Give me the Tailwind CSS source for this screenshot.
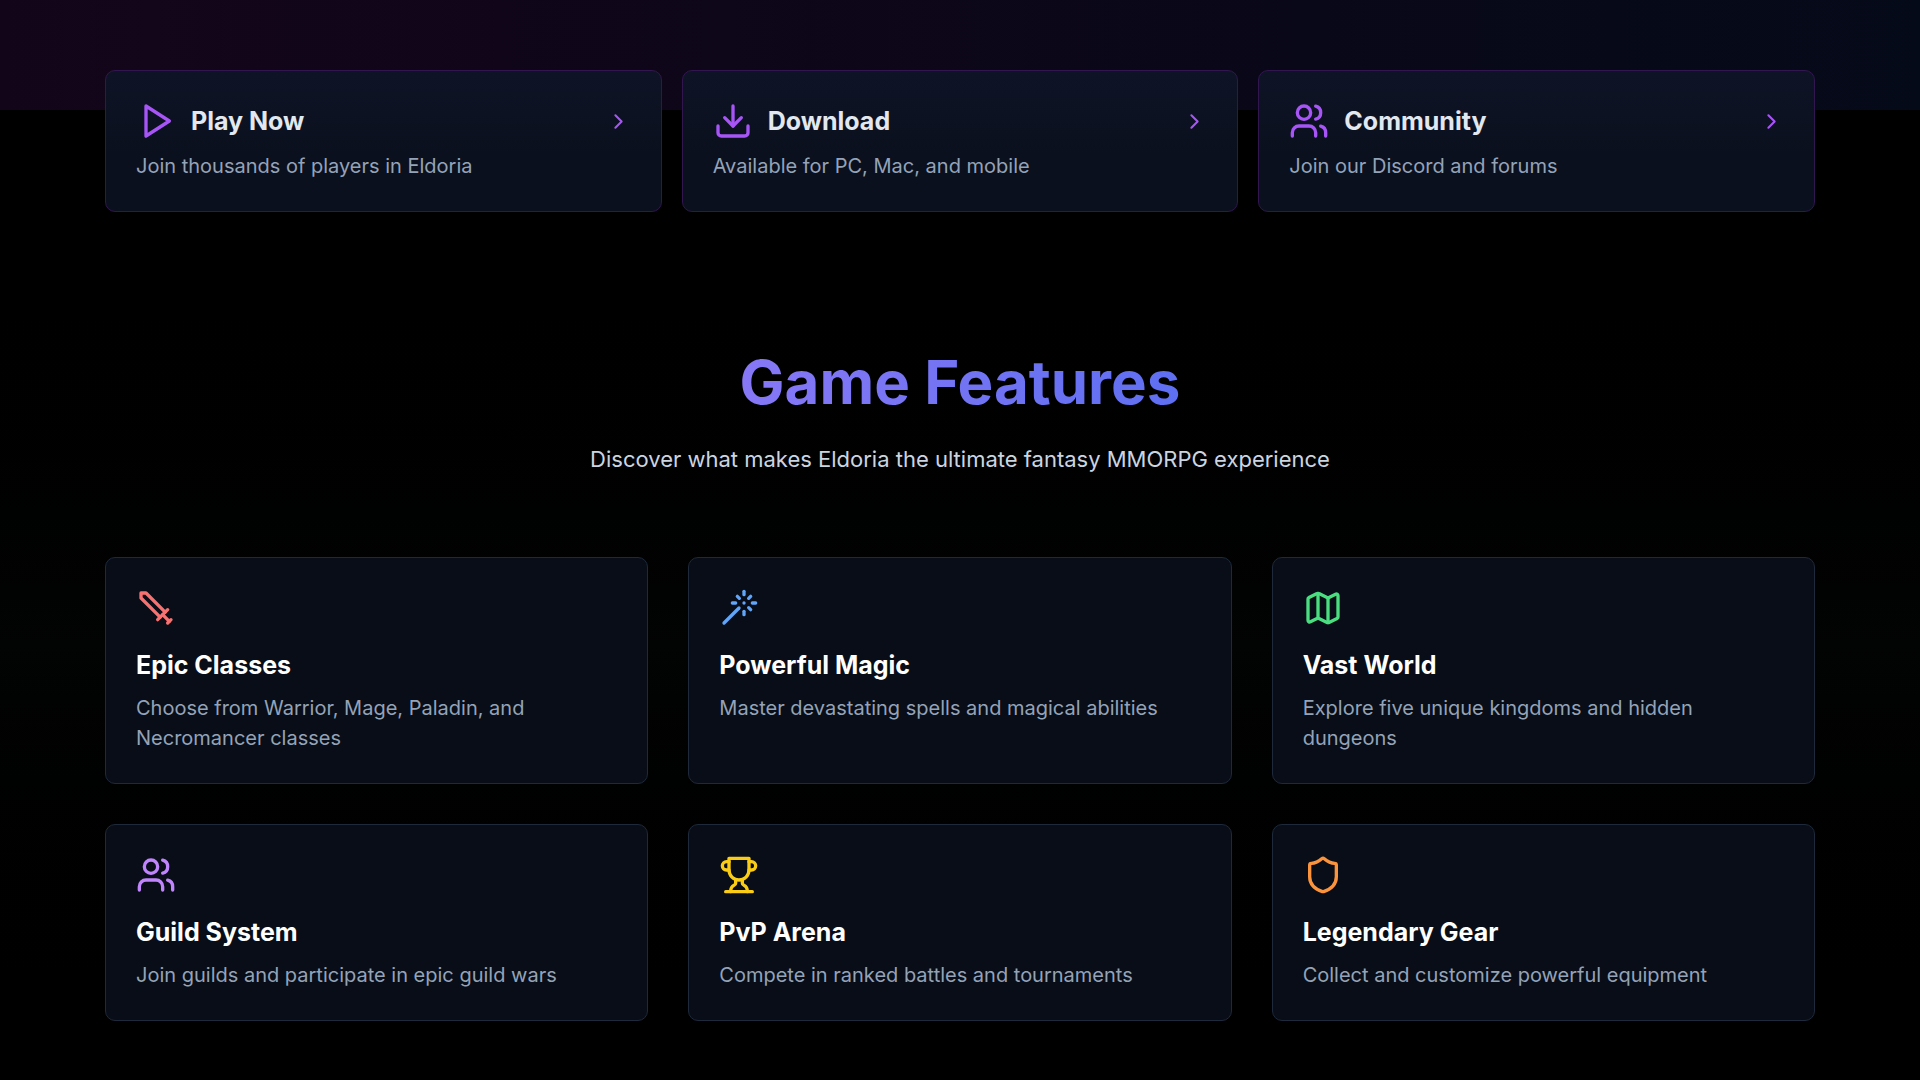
<!DOCTYPE html>
<html lang="en">
<head>
  <meta charset="UTF-8">
  <meta name="viewport" content="width=device-width, initial-scale=1.0">
  <title>Eldoria - Game Features</title>
  <script src="https://cdn.jsdelivr.net/npm/@tailwindcss/browser@4"></script>
</head>
<body class="bg-black min-h-screen font-['Inter',sans-serif] text-xl leading-[30px] text-white">

  <!-- Quick links, overlapping the end of the hero -->
  <section class="bg-[linear-gradient(to_right,#12051a_0%,#13051a_8%,#0e0619_38%,#090818_68%,#050a19_100%)] bg-no-repeat bg-[length:100%_110px] pt-[70px]">
    <div class="max-w-[1760px] mx-auto px-[25px] grid grid-cols-3 gap-5">

      <a href="#play" class="block rounded-[10px] border border-[#31164f] bg-linear-to-b from-[#0e1426] to-[#0b101e] to-60% p-[30px]">
        <div class="flex items-center justify-between mb-2.5">
          <div class="flex items-center gap-[15px]">
            <svg class="size-10 text-[#a855f7]" viewBox="0 0 24 24" fill="none" stroke="currentColor" stroke-width="2" stroke-linecap="round" stroke-linejoin="round"><polygon points="6 3 20 12 6 21 6 3"/></svg>
            <h3 class="text-[25px] leading-[35px] font-bold text-slate-200">Play Now</h3>
          </div>
          <svg class="size-[25px] text-[#a855f7]" viewBox="0 0 24 24" fill="none" stroke="currentColor" stroke-width="2" stroke-linecap="round" stroke-linejoin="round"><path d="m9 18 6-6-6-6"/></svg>
        </div>
        <p class="text-[#94a3b8]">Join thousands of players in Eldoria</p>
      </a>

      <a href="#download" class="block rounded-[10px] border border-[#31164f] bg-linear-to-b from-[#0e1426] to-[#0b101e] to-60% p-[30px]">
        <div class="flex items-center justify-between mb-2.5">
          <div class="flex items-center gap-[15px]">
            <svg class="size-10 text-[#a855f7]" viewBox="0 0 24 24" fill="none" stroke="currentColor" stroke-width="2" stroke-linecap="round" stroke-linejoin="round"><path d="M21 15v4a2 2 0 0 1-2 2H5a2 2 0 0 1-2-2v-4"/><polyline points="7 10 12 15 17 10"/><line x1="12" x2="12" y1="15" y2="3"/></svg>
            <h3 class="text-[25px] leading-[35px] font-bold text-slate-200">Download</h3>
          </div>
          <svg class="size-[25px] text-[#a855f7]" viewBox="0 0 24 24" fill="none" stroke="currentColor" stroke-width="2" stroke-linecap="round" stroke-linejoin="round"><path d="m9 18 6-6-6-6"/></svg>
        </div>
        <p class="text-[#94a3b8]">Available for PC, Mac, and mobile</p>
      </a>

      <a href="#community" class="block rounded-[10px] border border-[#31164f] bg-linear-to-b from-[#0e1426] to-[#0b101e] to-60% p-[30px]">
        <div class="flex items-center justify-between mb-2.5">
          <div class="flex items-center gap-[15px]">
            <svg class="size-10 text-[#a855f7]" viewBox="0 0 24 24" fill="none" stroke="currentColor" stroke-width="2" stroke-linecap="round" stroke-linejoin="round"><path d="M16 21v-2a4 4 0 0 0-4-4H6a4 4 0 0 0-4 4v2"/><circle cx="9" cy="7" r="4"/><path d="M22 21v-2a4 4 0 0 0-3-3.87"/><path d="M16 3.13a4 4 0 0 1 0 7.75"/></svg>
            <h3 class="text-[25px] leading-[35px] font-bold text-slate-200">Community</h3>
          </div>
          <svg class="size-[25px] text-[#a855f7]" viewBox="0 0 24 24" fill="none" stroke="currentColor" stroke-width="2" stroke-linecap="round" stroke-linejoin="round"><path d="m9 18 6-6-6-6"/></svg>
        </div>
        <p class="text-[#94a3b8]">Join our Discord and forums</p>
      </a>

    </div>
  </section>

  <!-- Features -->
  <section class="pt-[140px] pb-[60px] bg-linear-to-b from-black via-[#020303] to-black">
    <div class="max-w-[1760px] mx-auto px-[25px]">
      <div class="text-center mb-20">
        <h2 class="text-6xl leading-[60px] font-bold mb-[30px] bg-[linear-gradient(to_right,#c084fc,#2563eb)] bg-clip-text text-transparent">Game Features</h2>
        <p class="text-[22px] leading-[35px] text-[#cbd5e1]">Discover what makes Eldoria the ultimate fantasy MMORPG experience</p>
      </div>

      <div class="grid grid-cols-3 gap-10">

        <div class="rounded-[10px] border border-[#1e293b] bg-[#080d17] p-[30px]">
          <svg class="size-10 mb-5 text-[#f87171]" viewBox="0 0 24 24" fill="none" stroke="currentColor" stroke-width="2" stroke-linecap="round" stroke-linejoin="round"><polyline points="14.5 17.5 3 6 3 3 6 3 17.5 14.5"/><line x1="13" x2="19" y1="19" y2="13"/><line x1="16" x2="20" y1="16" y2="20"/><line x1="19" x2="21" y1="21" y2="19"/></svg>
          <h3 class="text-[25px] leading-[35px] font-bold mb-2.5">Epic Classes</h3>
          <p class="text-[#94a3b8]">Choose from Warrior, Mage, Paladin, and Necromancer classes</p>
        </div>

        <div class="rounded-[10px] border border-[#1e293b] bg-[#080d17] p-[30px]">
          <svg class="size-10 mb-5 text-[#60a5fa]" viewBox="0 0 24 24" fill="none" stroke="currentColor" stroke-width="2" stroke-linecap="round" stroke-linejoin="round"><path d="M15 4V2"/><path d="M15 16v-2"/><path d="M8 9h2"/><path d="M20 9h2"/><path d="M17.8 11.8 19 13"/><path d="M15 9h.01"/><path d="M17.8 6.2 19 5"/><path d="m3 21 9-9"/><path d="M12.2 6.2 11 5"/></svg>
          <h3 class="text-[25px] leading-[35px] font-bold mb-2.5">Powerful Magic</h3>
          <p class="text-[#94a3b8]">Master devastating spells and magical abilities</p>
        </div>

        <div class="rounded-[10px] border border-[#1e293b] bg-[#080d17] p-[30px]">
          <svg class="size-10 mb-5 text-[#4ade80]" viewBox="0 0 24 24" fill="none" stroke="currentColor" stroke-width="2" stroke-linecap="round" stroke-linejoin="round"><path d="M14.106 5.553a2 2 0 0 0 1.788 0l3.659-1.83A1 1 0 0 1 21 4.619v12.764a1 1 0 0 1-.553.894l-4.553 2.277a2 2 0 0 1-1.788 0l-4.212-2.106a2 2 0 0 0-1.788 0l-3.659 1.83A1 1 0 0 1 3 19.381V6.618a1 1 0 0 1 .553-.894l4.553-2.277a2 2 0 0 1 1.788 0z"/><path d="M15 5.764v15"/><path d="M9 3.236v15"/></svg>
          <h3 class="text-[25px] leading-[35px] font-bold mb-2.5">Vast World</h3>
          <p class="text-[#94a3b8]">Explore five unique kingdoms and hidden dungeons</p>
        </div>

        <div class="rounded-[10px] border border-[#1e293b] bg-[#080d17] p-[30px]">
          <svg class="size-10 mb-5 text-[#c084fc]" viewBox="0 0 24 24" fill="none" stroke="currentColor" stroke-width="2" stroke-linecap="round" stroke-linejoin="round"><path d="M16 21v-2a4 4 0 0 0-4-4H6a4 4 0 0 0-4 4v2"/><circle cx="9" cy="7" r="4"/><path d="M22 21v-2a4 4 0 0 0-3-3.87"/><path d="M16 3.13a4 4 0 0 1 0 7.75"/></svg>
          <h3 class="text-[25px] leading-[35px] font-bold mb-2.5">Guild System</h3>
          <p class="text-[#94a3b8]">Join guilds and participate in epic guild wars</p>
        </div>

        <div class="rounded-[10px] border border-[#1e293b] bg-[#080d17] p-[30px]">
          <svg class="size-10 mb-5 text-[#facc15]" viewBox="0 0 24 24" fill="none" stroke="currentColor" stroke-width="2" stroke-linecap="round" stroke-linejoin="round"><path d="M6 9H4.5a2.5 2.5 0 0 1 0-5H6"/><path d="M18 9h1.5a2.5 2.5 0 0 0 0-5H18"/><path d="M4 22h16"/><path d="M10 14.66V17c0 .55-.47.98-.97 1.21C7.85 18.75 7 20.24 7 22"/><path d="M14 14.66V17c0 .55.47.98.97 1.21C16.15 18.75 17 20.24 17 22"/><path d="M18 2H6v7a6 6 0 0 0 12 0V2Z"/></svg>
          <h3 class="text-[25px] leading-[35px] font-bold mb-2.5">PvP Arena</h3>
          <p class="text-[#94a3b8]">Compete in ranked battles and tournaments</p>
        </div>

        <div class="rounded-[10px] border border-[#1e293b] bg-[#080d17] p-[30px]">
          <svg class="size-10 mb-5 text-[#fb923c]" viewBox="0 0 24 24" fill="none" stroke="currentColor" stroke-width="2" stroke-linecap="round" stroke-linejoin="round"><path d="M20 13c0 5-3.5 7.5-7.66 8.95a1 1 0 0 1-.67-.01C7.5 20.5 4 18 4 13V6a1 1 0 0 1 1-1c2 0 4.5-1.2 6.24-2.72a1.17 1.17 0 0 1 1.52 0C14.51 3.81 17 5 19 5a1 1 0 0 1 1 1z"/></svg>
          <h3 class="text-[25px] leading-[35px] font-bold mb-2.5">Legendary Gear</h3>
          <p class="text-[#94a3b8]">Collect and customize powerful equipment</p>
        </div>

      </div>
    </div>
  </section>

</body>
</html>
